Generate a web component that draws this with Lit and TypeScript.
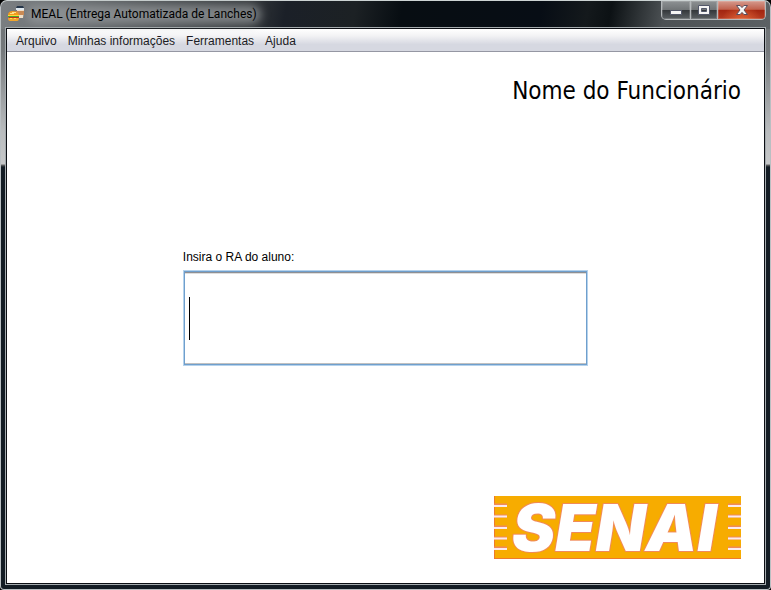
import { LitElement, html, css } from "lit";
import { customElement, property } from "lit/decorators.js";

@customElement("title-bar")
class TitleBar extends LitElement {
  @property() caption = "";

  static styles = css`
    :host {
      display: flex;
      justify-content: space-between;
      align-items: flex-start;
      height: 26px;
      padding-left: 2px;
    }
    .caption {
      position: relative;
      display: flex;
      align-items: center;
      gap: 7px;
      height: 26px;
      font: 12px/20px Roboto, "Noto Sans", sans-serif;
      color: #000;
      white-space: nowrap;
    }
    .caption::before {
      content: "";
      position: absolute;
      inset: 4px -4px 3px 20px;
      border-radius: 9px;
      background: rgba(150, 153, 156, 0.75);
      filter: blur(5px);
    }
    .caption span,
    .caption svg {
      position: relative;
    }
    .controls {
      display: flex;
      height: 18px;
      border: 1px solid #b4b8ba;
      border-top: 0;
      border-radius: 0 0 5px 5px;
      overflow: hidden;
    }
    button {
      display: grid;
      place-items: center;
      width: 29px;
      height: 18px;
      padding: 0;
      border: 0;
      border-right: 1px solid #b4b8ba;
      background: linear-gradient(#8d9193, #717577 48%, #34383b 52%, #5b6063);
      box-shadow: inset 0 0 0 1px rgba(255, 255, 255, 0.16);
    }
    .restore {
      width: 27px;
    }
    .close {
      width: 47px;
      border-right: 0;
      background: radial-gradient(ellipse at 50% 110%, rgba(235, 110, 60, 0.8), transparent 60%),
        linear-gradient(#d59a8d, #c0614e 46%, #a32510 52%, #b43a20);
    }
    svg {
      display: block;
    }
  `;

  render() {
    return html`
      <div class="caption">
        <svg width="17" height="16" viewBox="0 0 17 16" aria-hidden="true">
          <path d="M10 0h6l1 2v1H9V2z" fill="#25364a" />
          <path d="M9 2h8v2H9z" fill="#dfe8ee" />
          <path d="M10 4h7l-1 8h-6z" fill="#f0dfc8" />
          <path d="M9 5h8v4H9z" fill="#c98a55" />
          <path d="M1 9q0-4 5-4t6 4v1H1z" fill="#f09a20" />
          <path d="M3 7h2V6h4v1H7v1H3z" fill="#ffe08a" />
          <path d="M1 9h11v1H1z" fill="#ffd83a" />
          <path d="M1 10h11v1H1z" fill="#49a82a" />
          <path d="M2 11h10v1H2z" fill="#c2331b" />
          <path d="M1 12h11q0 3-2 3H3q-2 0-2-3z" fill="#f0a52d" />
          <path d="M3 12h2v1H3zM7 12h2v1H7z" fill="#ffe24b" />
        </svg>
        <span>${this.caption}</span>
      </div>
      <div class="controls">
        <button type="button" aria-label="Minimizar">
          <svg width="12" height="10" viewBox="0 0 12 10">
            <path d="M.5 5.500h11v4H.5z" fill="#f4f4f4" stroke="#53586a" />
          </svg>
        </button>
        <button type="button" class="restore" aria-label="Maximizar">
          <svg width="12" height="10" viewBox="0 0 12 10">
            <path
              d="M.5.5h11v9H.5zM3.500 3.500v3h5v-3z"
              fill="#f4f4f4"
              fill-rule="evenodd"
              stroke="#53586a"
            />
          </svg>
        </button>
        <button type="button" class="close" aria-label="Fechar">
          <svg width="12" height="10" viewBox="0 0 12 10">
            <path
              d="M.5.5h3.600L6 2.600 7.900.5h3.600L8 5l3.500 4.500H7.900L6 7.400 4.100 9.500H.5L4 5z"
              fill="#f6f6f6"
              stroke="#5a4d5c"
            />
          </svg>
        </button>
      </div>
    `;
  }
}

@customElement("menu-bar")
class MenuBar extends LitElement {
  static styles = css`
    nav {
      display: flex;
      gap: 11px;
      height: 22px;
      padding-left: 9px;
      border-bottom: 1px solid #9597a3;
      background: linear-gradient(#fff, #f3f3f5 30%, #d6d8e1 70%, #d6d8e1);
      font: 12px/24px "Liberation Sans", Arial, sans-serif;
    }
    a {
      color: #1c1c24;
      text-decoration: none;
      white-space: nowrap;
    }
  `;

  render() {
    return html`<nav>
      ${["Arquivo", "Minhas informações", "Ferramentas", "Ajuda"].map(
        (item) => html`<a href="#">${item}</a>`
      )}
    </nav>`;
  }
}

@customElement("senai-logo")
class SenaiLogo extends LitElement {
  static styles = css`
    :host,
    svg {
      display: block;
    }
    svg {
      overflow: visible;
    }
    .word {
      font: italic 900 65px Inter, "Liberation Sans", sans-serif;
      fill: #fff;
      stroke: #f08a5a;
      stroke-width: 2px;
      stroke-linejoin: round;
      paint-order: stroke;
    }
  `;

  render() {
    return html`<svg width="247" height="63" viewBox="0 0 247 63" role="img" aria-label="SENAI">
      <rect width="247" height="63" fill="#f7ac00" />
      <path d="M.5 0v63M0 62.500h247" stroke="#ee7a2c" fill="none" />
      <path
        d="M0 9h13M0 20h13M0 31h13M0 42h13M0 52h13M234 9h13M234 20h13M234 31h13M234 42h13M234 52h13"
        stroke="#f08a5a"
        stroke-width="3"
      />
      <path
        d="M0 10h13M0 20.500h13M0 32h13M0 42.500h13M0 53h13M234 10h13M234 20.500h13M234 32h13M234 42.500h13M234 53h13"
        stroke="#fbeaf0"
        stroke-width="2"
      />
      <text class="word" x="18" y="55">SENAI</text>
    </svg>`;
  }
}

@customElement("app-root")
class AppRoot extends LitElement {
  static styles = css`
    :host {
      display: block;
      background: #000;
    }
    .window {
      box-sizing: border-box;
      display: flex;
      flex-direction: column;
      min-height: 100vh;
      padding: 0 4px 4px;
      border: 1px solid #b9bfc2;
      border-top-color: #ccd3d3;
      border-radius: 7px 7px 4px 4px;
      background: linear-gradient(
            100deg,
            #7b7f82 0,
            #6c7073 8%,
            #4a4e51 22%,
            #34383b 32%,
            #1b2028 37%,
            #1c2124 46%,
            #070d12 52%,
            #070d15 70%,
            #14191c 76%,
            #0c1114 79%,
            #4c5154 86%,
            #5c6164
          )
          top / 100% 28px no-repeat,
        linear-gradient(#6a6e71, #75797c 50px, #b9bcbe 130px, #c6c8c9 163px, #666 164px, transparent 166px)
          top / 100% 166px no-repeat,
        #131c24;
    }
    .client {
      flex: 1;
      display: flex;
      flex-direction: column;
      border: 1px solid #0c0f14;
      outline: 1px solid #a5abae;
      margin: 1px;
      background: #fff;
    }
    main {
      flex: 1;
      display: flex;
      flex-direction: column;
      justify-content: space-between;
      padding: 23px 23px 24px;
    }
    h1 {
      margin: 0;
      font: 24px/32px "DejaVu Sans Condensed", Tahoma, sans-serif;
      color: #000;
      text-align: right;
    }
    form {
      align-self: center;
      display: flex;
      flex-direction: column;
      gap: 5px;
      width: 57%;
      min-width: 240px;
      margin-top: 12px;
    }
    label {
      font: 12px/16px "Liberation Sans", Arial, sans-serif;
      color: #000;
    }
    .field {
      position: relative;
      display: flex;
    }
    input {
      box-sizing: border-box;
      width: 100%;
      height: 96px;
      padding: 0 6px;
      border: 1px solid #b5d2ec;
      border-radius: 0;
      outline: 0;
      background: #fff;
      box-shadow: inset 0 0 0 1px #6f9fcd, inset 0 2px 0 #8e8f93, inset 0 3px 0 #dedede,
        inset 0 -2px 0 #c0c0c0;
      font: 36px/44px "Liberation Sans", Arial, sans-serif;
      caret-color: transparent;
    }
    .caret {
      position: absolute;
      left: 6px;
      top: 27px;
      width: 1px;
      height: 43px;
      background: #000;
    }
    senai-logo {
      align-self: flex-end;
    }
  `;

  render() {
    return html`
      <div class="window">
        <title-bar caption="MEAL (Entrega Automatizada de Lanches)"></title-bar>
        <div class="client">
          <menu-bar></menu-bar>
          <main>
            <h1>Nome do Funcionário</h1>
            <form>
              <label for="ra">Insira o RA do aluno:</label>
              <div class="field">
                <input id="ra" type="text" autocomplete="off" />
                <span class="caret"></span>
              </div>
            </form>
            <senai-logo></senai-logo>
          </main>
        </div>
      </div>
    `;
  }
}
